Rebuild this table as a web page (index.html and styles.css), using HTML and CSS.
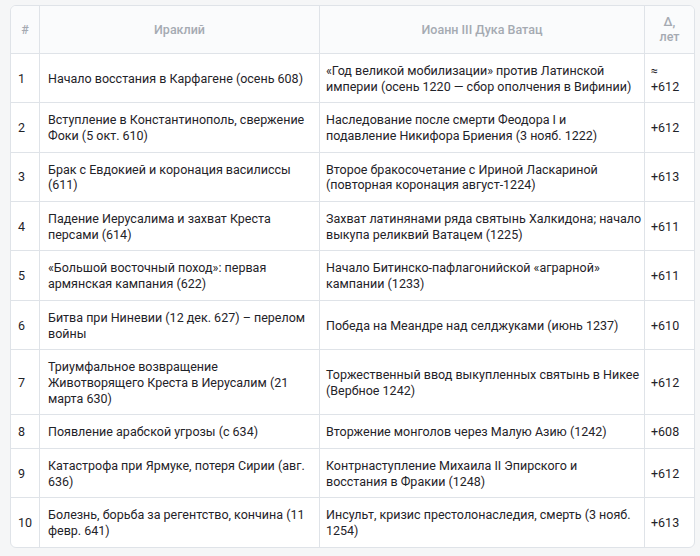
FILE: index.html
```html
<!DOCTYPE html>
<html lang="ru">
<head>
<meta charset="utf-8">
<link rel="stylesheet" href="styles.css">
</head>
<body>
<div class="wrap">
<table class="tbl">
<colgroup><col class="c-num"><col class="c-a"><col class="c-b"><col class="c-d"></colgroup>
<thead>
<tr><th>#</th><th>Ираклий</th><th>Иоанн III Дука Ватац</th><th class="delta">Δ,<br>лет</th></tr>
</thead>
<tbody>
<tr><td>1</td><td>Начало восстания в Карфагене (осень 608)</td><td>«Год великой мобилизации» против Латинской<br>империи (осень 1220 — сбор ополчения в Вифинии)</td><td>≈<br>+612</td></tr>
<tr><td>2</td><td>Вступление в Константинополь, свержение<br>Фоки (5 окт. 610)</td><td>Наследование после смерти Феодора I и<br>подавление Никифора Бриения (3 нояб. 1222)</td><td>+612</td></tr>
<tr><td>3</td><td>Брак с Евдокией и коронация василиссы<br>(611)</td><td>Второе бракосочетание с Ириной Ласкариной<br>(повторная коронация август‑1224)</td><td>+613</td></tr>
<tr><td>4</td><td>Падение Иерусалима и захват Креста<br>персами (614)</td><td>Захват латинянами ряда святынь Халкидона; начало<br>выкупа реликвий Ватацем (1225)</td><td>+611</td></tr>
<tr><td>5</td><td>«Большой восточный поход»: первая<br>армянская кампания (622)</td><td>Начало Битинско-пафлагонийской «аграрной»<br>кампании (1233)</td><td>+611</td></tr>
<tr><td>6</td><td>Битва при Ниневии (12 дек. 627) – перелом<br>войны</td><td>Победа на Меандре над селджуками (июнь 1237)</td><td>+610</td></tr>
<tr><td>7</td><td>Триумфальное возвращение<br>Животворящего Креста в Иерусалим (21<br>марта 630)</td><td>Торжественный ввод выкупленных святынь в Никее<br>(Вербное 1242)</td><td>+612</td></tr>
<tr><td>8</td><td>Появление арабской угрозы (с 634)</td><td>Вторжение монголов через Малую Азию (1242)</td><td>+608</td></tr>
<tr><td>9</td><td>Катастрофа при Ярмуке, потеря Сирии (авг.<br>636)</td><td>Контрнаступление Михаила II Эпирского и<br>восстания в Фракии (1248)</td><td>+612</td></tr>
<tr><td>10</td><td>Болезнь, борьба за регентство, кончина (11<br>февр. 641)</td><td>Инсульт, кризис престолонаследия, смерть (3 нояб.<br>1254)</td><td>+613</td></tr>
</tbody>
</table>
</div>
</body>
</html>
```
FILE: styles.css
```css
html, body {
  margin: 0;
  background: #f5f6f7;
}
body {
  font-family: "Roboto", "Liberation Sans", sans-serif;
  font-size: 12.5px;
  color: #1f2329;
}
.wrap {
  padding: 5px 7px 0 10px;
}
.tbl {
  width: 683px;
  table-layout: fixed;
  border-collapse: separate;
  border-spacing: 0;
  background: #ffffff;
  border: 1px solid #dfe3e8;
  border-radius: 6px;
  overflow: hidden;
}
.c-num { width: 29px; }
.c-a { width: 280px; }
.c-b { width: 325px; }
.c-d { width: 49px; }
.tbl th, .tbl td {
  border-right: 1px solid #dfe3e8;
  border-bottom: 1px solid #dfe3e8;
  text-align: left;
  vertical-align: middle;
}
.tbl th:last-child, .tbl td:last-child { border-right: none; }
.tbl tbody tr:last-child td { border-bottom: none; }
.tbl th {
  background: #fafbfc;
  color: #a5aab2;
  font-weight: 500;
  text-align: center;
  line-height: 15.4px;
  padding: 8px 6px;
  border-bottom: 1px solid #dfe3e8;
}
.tbl td {
  line-height: 15.7px;
  padding: 9px 2px 8px 8px;
  white-space: nowrap;
}
.tbl td:first-child { padding-left: 7px; }
.tbl td:nth-child(3) { padding-left: 6px; }
.tbl td:last-child { padding-left: 6px; }
```
